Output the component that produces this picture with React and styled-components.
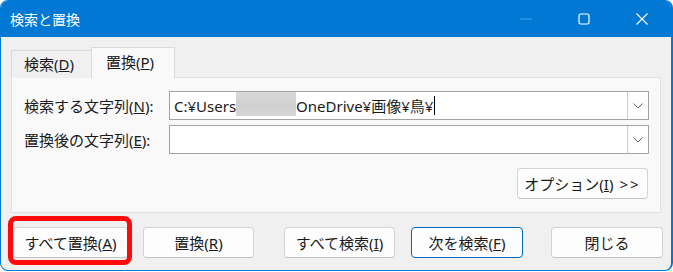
import React from "react";
import styled, { createGlobalStyle, css } from "styled-components";

const Global = createGlobalStyle`
  html, body { margin: 0; padding: 0; background: #ffffff; }
  body { font-family: "Noto Sans", "Noto Sans CJK JP", sans-serif; }
  * { box-sizing: border-box; }
`;

const Window = styled.div`
  width: 673px;
  height: 271px;
  border: 1px solid #0078d4;
  border-right-width: 2px;
  border-radius: 8px;
  overflow: hidden;
  background: #f0f0f0;
  display: flex;
  flex-direction: column;
  color: #1a1a1a;
  font-family: "Noto Sans", "Noto Sans CJK JP", sans-serif;
`;

const TitleBar = styled.div`
  height: 36px;
  flex: none;
  background: #0078d4;
  display: flex;
  align-items: center;
  padding-left: 9px;
`;

const Title = styled.div`
  flex: 1;
  color: #ffffff;
  font-size: 14px;
  line-height: 18px;
  margin-top: 1px;
`;

const Control = styled.div`
  width: 58px;
  height: 36px;
  display: flex;
  align-items: center;
  justify-content: center;
`;

const Body = styled.div`
  flex: 1;
  display: flex;
  flex-direction: column;
  padding: 11px 0 0 10px;
`;

const TabRow = styled.div`
  display: flex;
  align-items: flex-end;
  height: 30px;
  position: relative;
  z-index: 1;
  margin-bottom: -1px;
`;

const Tab = styled.div`
  display: flex;
  align-items: center;
  font-size: 15px;
  line-height: 20px;
  border: 1px solid #dadada;
  border-bottom: none;
  ${(p) =>
    p.$active
      ? css`
          height: 31px;
          background: #f9f9f9;
          padding: 0 0 3px 14px;
          margin-left: -1px;
        `
      : css`
          height: 28px;
          background: #f0f0f0;
          padding: 0 0 2px 12px;
          border-right: none;
        `}
  width: ${(p) => p.$w}px;
`;

const Panel = styled.div`
  width: 650px;
  height: 136px;
  border: 1px solid #e2e2e2;
  background: #f9f9f9;
  padding: 13px 11px 12px 12px;
  display: flex;
  flex-direction: column;
  gap: 5px;
`;

const FieldRow = styled.div`
  display: flex;
  align-items: center;
  height: 29px;
`;

const Label = styled.div`
  width: 145px;
  font-size: 15px;
  line-height: 20px;
  padding-top: 1px;
`;

const Combo = styled.div`
  flex: 1;
  height: 29px;
  border: 1px solid #a2a2a2;
  background: #ffffff;
  display: flex;
  align-items: stretch;
`;

const ComboText = styled.div`
  flex: 1;
  display: flex;
  align-items: center;
  padding-left: 4px;
  font-size: 15px;
  line-height: 20px;
  white-space: nowrap;
  overflow: hidden;
`;

const Blur = styled.span`
  display: inline-block;
  width: 60px;
  height: 24px;
  align-self: flex-start;
  background: linear-gradient(180deg, #d9d9d9 0%, #cfcfcf 60%, #d6d6d6 100%);
`;

const Caret = styled.span`
  display: inline-block;
  width: 1px;
  height: 19px;
  background: #000;
  margin-left: 1px;
`;

const DropButton = styled.div`
  width: 21px;
  border-left: 1px solid #cfcfcf;
  display: flex;
  align-items: center;
  justify-content: center;
`;

const OptionRow = styled.div`
  display: flex;
  justify-content: flex-end;
  margin-top: 9px;
  padding-right: 1px;
`;

const Button = styled.div`
  position: relative;
  width: ${(p) => p.$w}px;
  height: 31px;
  margin-left: ${(p) => p.$ml || 0}px;
  background: #fdfdfd;
  border: 1px solid ${(p) => (p.$focus ? "#0067c0" : "#d3d3d3")};
  border-bottom-color: ${(p) => (p.$focus ? "#0067c0" : "#c2c2c2")};
  border-radius: 4px;
  display: flex;
  align-items: center;
  justify-content: center;
  font-size: 15px;
  line-height: 20px;
  white-space: pre;
`;

const Arrows = styled.span`
  letter-spacing: 2px;
  margin-left: 6px;
`;

const Highlight = styled.div`
  position: absolute;
  top: -12px;
  bottom: -8px;
  left: -6px;
  right: -5px;
  border: 5px solid #ff0a0a;
  border-radius: 8px;
  pointer-events: none;
`;

const ButtonRow = styled.div`
  display: flex;
  margin-top: 14px;
  padding-left: 2px;
`;

const Chevron = () => (
  <svg width="10" height="6" viewBox="0 0 10 6">
    <path d="M0.5 0.5 L5 5 L9.5 0.5" fill="none" stroke="#5f5f5f" strokeWidth="1" />
  </svg>
);

export default function App() {
  return (
    <>
      <Global />
      <Window>
        <TitleBar>
          <Title>検索と置換</Title>
          <Control>
            <svg width="12" height="2" viewBox="0 0 12 2">
              <rect x="0" y="0.5" width="12" height="1" fill="#4d9fe3" />
            </svg>
          </Control>
          <Control>
            <svg width="12" height="12" viewBox="0 0 12 12">
              <rect x="1" y="1" width="10" height="10" rx="1.5" fill="none" stroke="#ffffff" strokeWidth="1.2" />
            </svg>
          </Control>
          <Control>
            <svg width="12" height="12" viewBox="0 0 12 12">
              <path d="M0.5 0.5 L11.5 11.5 M11.5 0.5 L0.5 11.5" stroke="#ffffff" strokeWidth="1.1" />
            </svg>
          </Control>
        </TitleBar>
        <Body>
          <TabRow>
            <Tab $w={81}>
              検索(<u>D</u>)
            </Tab>
            <Tab $active $w={84}>
              置換(<u>P</u>)
            </Tab>
          </TabRow>
          <Panel>
            <FieldRow>
              <Label>
                検索する文字列(<u>N</u>):
              </Label>
              <Combo>
                <ComboText>
                  C:¥Users<Blur />OneDrive¥画像¥鳥¥<Caret />
                </ComboText>
                <DropButton>
                  <Chevron />
                </DropButton>
              </Combo>
            </FieldRow>
            <FieldRow>
              <Label>
                置換後の文字列(<u>E</u>):
              </Label>
              <Combo>
                <ComboText />
                <DropButton>
                  <Chevron />
                </DropButton>
              </Combo>
            </FieldRow>
            <OptionRow>
              <Button $w={131}>
                オプション(<u>I</u>)<Arrows>&gt;&gt;</Arrows>
              </Button>
            </OptionRow>
          </Panel>
          <ButtonRow>
            <Button $w={115}>
              すべて置換(<u>A</u>)
              <Highlight />
            </Button>
            <Button $w={111} $ml={15}>
              置換(<u>R</u>)
            </Button>
            <Button $w={111} $ml={30}>
              すべて検索(<u>I</u>)
            </Button>
            <Button $w={112} $ml={16} $focus>
              次を検索(<u>F</u>)
            </Button>
            <Button $w={112} $ml={28}>
              閉じる
            </Button>
          </ButtonRow>
        </Body>
      </Window>
    </>
  );
}
